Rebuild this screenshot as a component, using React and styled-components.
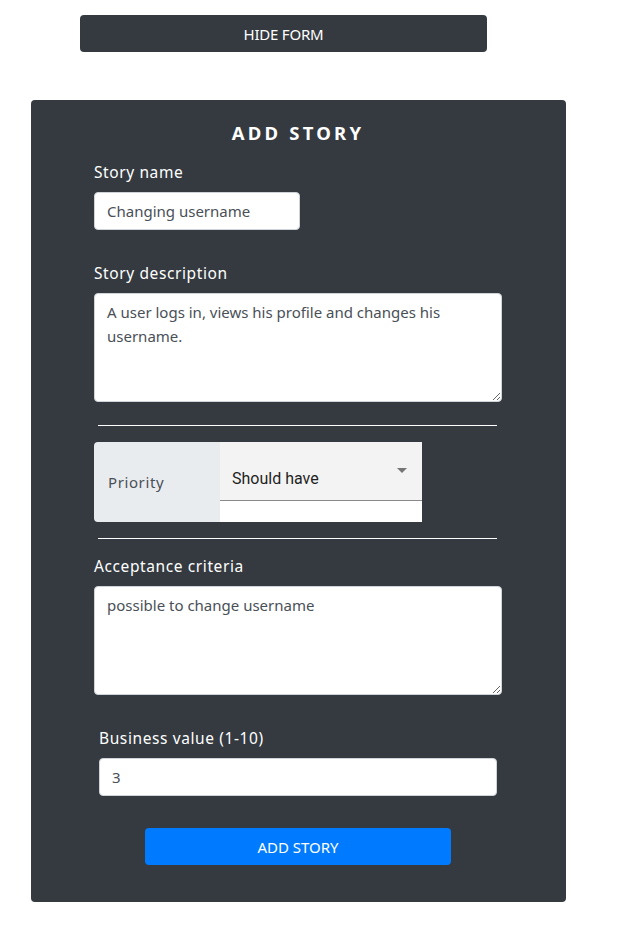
import React from "react";
import styled, { createGlobalStyle } from "styled-components";

const Global = createGlobalStyle`
  body { margin: 0; background: #fff; font-family: "Noto Sans", "Open Sans", sans-serif; }
  * { box-sizing: border-box; }
`;

const Page = styled.div`
  padding: 15px 0 24px 31px;
  display: flex;
  flex-direction: column;
  align-items: flex-start;
`;

const HideButton = styled.button`
  margin-left: 49px;
  width: 407px;
  height: 37px;
  background: #343a40;
  color: #fff;
  border: none;
  border-radius: 4px;
  font-family: "Noto Sans", sans-serif;
  font-size: 15px;
  letter-spacing: -0.2px;
`;

const Card = styled.form`
  margin-top: 48px;
  width: 535px;
  background: #343a40;
  border-radius: 4px;
  padding: 18px 64px 37px 63px;
  display: flex;
  flex-direction: column;
`;

const Title = styled.h2`
  margin: 0 0 13px;
  text-align: center;
  color: #fff;
  font-size: 18.5px;
  font-weight: 700;
  letter-spacing: 3.2px;
  line-height: 30px;
`;

const Field = styled.div`
  display: flex;
  flex-direction: column;
  align-items: flex-start;
  margin: ${(p) => p.$m || "0"};
  padding: ${(p) => p.$pad || "0"};
`;

const Label = styled.label`
  color: #fff;
  font-size: 15.5px;
  letter-spacing: 0.6px;
  line-height: 23px;
  margin-bottom: 8px;
`;

const TextInput = styled.input`
  width: ${(p) => p.$w || "100%"};
  height: 38px;
  border: 1px solid #ced4da;
  border-radius: 4px;
  padding: 0 12px;
  font-family: "Noto Sans", sans-serif;
  font-size: 15px;
  color: #495057;
  background: #fff;
`;

const TextArea = styled.textarea`
  width: 100%;
  height: 109px;
  border: 1px solid #ced4da;
  border-radius: 4px;
  padding: 6px 12px;
  font-family: "Noto Sans", sans-serif;
  font-size: 15px;
  line-height: 24px;
  color: #495057;
  resize: vertical;
`;

const Rule = styled.hr`
  width: 399px;
  margin: ${(p) => p.$m};
  margin-left: 4px;
  border: none;
  border-top: 1px solid #fff;
`;

const Group = styled.div`
  display: flex;
  width: 328px;
  height: 80px;
`;

const GroupLabel = styled.div`
  width: 126px;
  background: #e9ecef;
  border-radius: 4px 0 0 4px;
  color: #495057;
  font-size: 15px;
  letter-spacing: 0.6px;
  display: flex;
  align-items: center;
  padding: 0 14px;
`;

const SelectBox = styled.div`
  flex: 1;
  background: #fff;
  display: flex;
  flex-direction: column;
`;

const SelectFilled = styled.div`
  height: 59px;
  background: #f3f3f3;
  border-bottom: 1px solid #8a8a8a;
  display: flex;
  align-items: center;
  justify-content: space-between;
  padding: 14px 15px 0 12px;
  font-family: Roboto, sans-serif;
  font-size: 16px;
  color: #1f1f1f;
`;

const Caret = styled.span`
  width: 0;
  height: 0;
  border-left: 5px solid transparent;
  border-right: 5px solid transparent;
  border-top: 5px solid #757575;
  align-self: flex-start;
  margin-top: 12px;
`;

const SubmitButton = styled.button`
  align-self: center;
  margin-top: 32px;
  width: 306px;
  height: 37px;
  background: #007bff;
  border: none;
  border-radius: 4px;
  color: #fff;
  font-family: "Noto Sans", sans-serif;
  font-size: 15px;
`;

export default function App() {
  return (
    <>
      <Global />
      <Page>
        <HideButton type="button">HIDE FORM</HideButton>
        <Card onSubmit={(e) => e.preventDefault()}>
          <Title>ADD STORY</Title>
          <Field>
            <Label>Story name</Label>
            <TextInput $w="206px" defaultValue="Changing username" />
          </Field>
          <Field $m="32px 0 0">
            <Label>Story description</Label>
            <TextArea defaultValue="A user logs in, views his profile and changes his username." />
          </Field>
          <Rule $m="23px 0 16px" />
          <Group>
            <GroupLabel>Priority</GroupLabel>
            <SelectBox>
              <SelectFilled>
                <span>Should have</span>
                <Caret />
              </SelectFilled>
            </SelectBox>
          </Group>
          <Rule $m="16px 0 16px" />
          <Field>
            <Label>Acceptance criteria</Label>
            <TextArea defaultValue="possible to change username" />
          </Field>
          <Field $m="32px 0 0" $pad="0 5px">
            <Label>Business value (1-10)</Label>
            <TextInput defaultValue="3" />
          </Field>
          <SubmitButton type="submit">ADD STORY</SubmitButton>
        </Card>
      </Page>
    </>
  );
}
